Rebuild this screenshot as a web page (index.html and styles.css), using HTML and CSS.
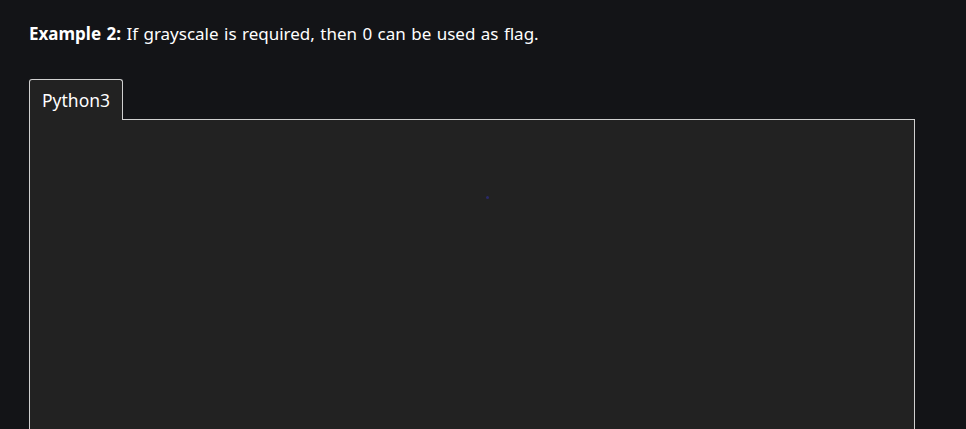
FILE: index.html
```html
<!DOCTYPE html>
<html>
<head>
<meta charset="utf-8">
<link rel="stylesheet" href="styles.css">
</head>
<body>
<div class="page">
  <p class="lead"><b>Example 2:</b> If grayscale is required, then 0 can be used as flag.</p>
  <div class="tabs">
    <div class="tab">Python3</div>
  </div>
  <div class="panel">
    <span class="dot"></span>
  </div>
</div>
</body>
</html>
```
FILE: styles.css
```css
html, body {
  margin: 0;
  padding: 0;
  background: #131417;
  height: 100%;
  overflow: hidden;
}
.page {
  padding: 0 51px 0 29px;
  font-family: "Noto Sans", "DejaVu Sans", sans-serif;
  color: #ffffff;
}
.lead {
  margin: 0;
  padding-top: 22px;
  font-size: 17px;
  line-height: 24px;
  word-spacing: 1px;
}
.lead b {
  font-weight: 700;
}
.tabs {
  display: flex;
  margin-top: 33px;
}
.tab {
  border: 1px solid #d0d0d0;
  border-bottom: none;
  border-radius: 3px 3px 0 0;
  background: #222222;
  width: 94px;
  height: 41px;
  box-sizing: border-box;
  padding: 9px 0 0 12px;
  font-size: 17.5px;
  line-height: 22px;
  margin-bottom: -1px;
  position: relative;
  z-index: 1;
}
.panel {
  border: 1px solid #d0d0d0;
  border-bottom: none;
  background: #222222;
  height: 310px;
  position: relative;
}
.dot {
  position: absolute;
  left: 456px;
  top: 76px;
  width: 3px;
  height: 3px;
  background: #2a2a6a;
  border-radius: 50%;
}
```
